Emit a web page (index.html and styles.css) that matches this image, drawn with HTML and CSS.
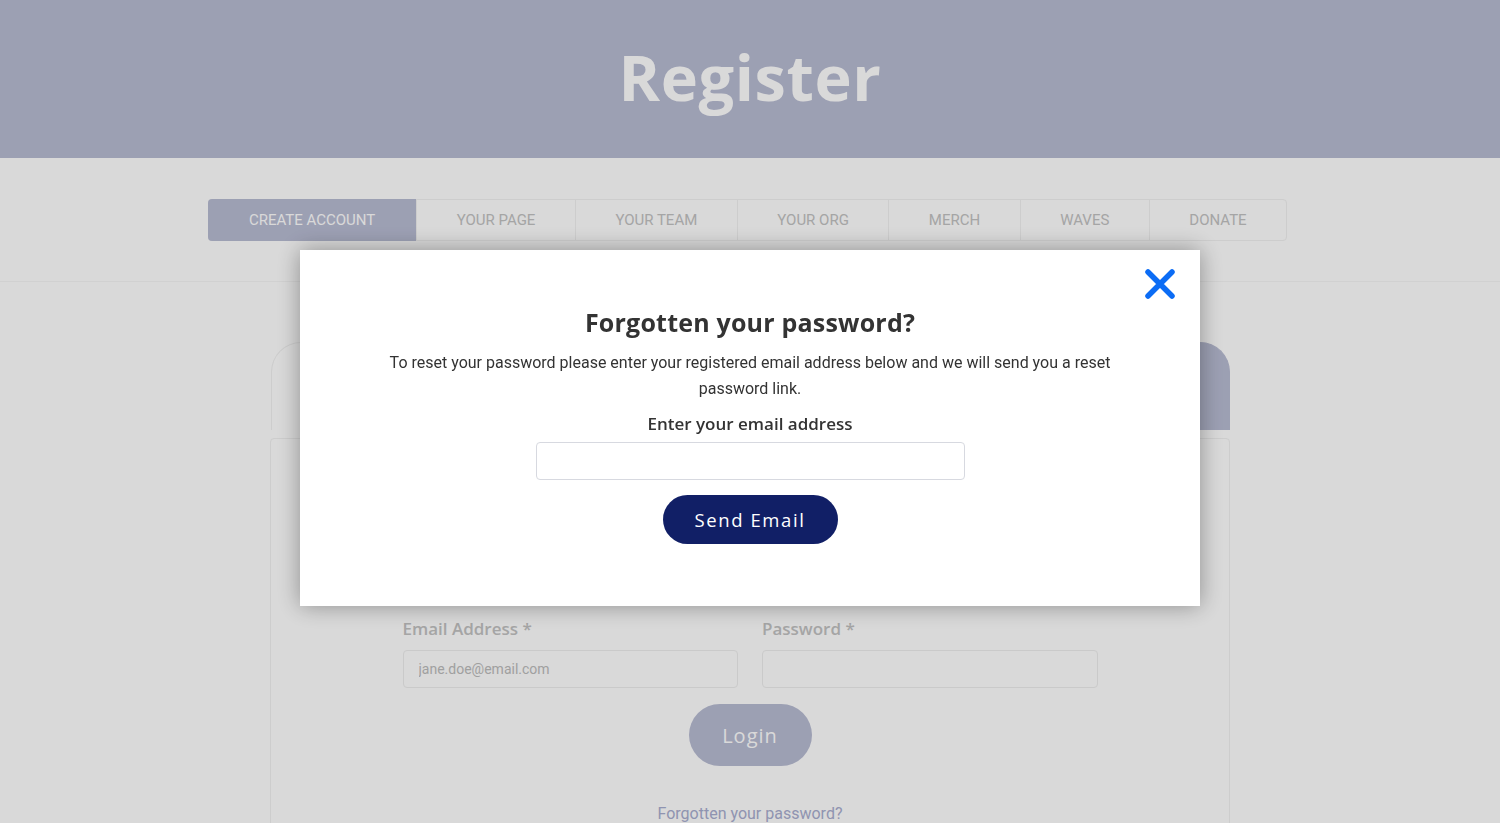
FILE: index.html
```html
<!DOCTYPE html>
<html lang="en">
<head>
    <meta charset="UTF-8">
    <meta name="viewport" content="width=device-width, initial-scale=1.0">
    <title>Register</title>
    <link rel="stylesheet" href="styles.css">
</head>
<body>
    <header class="banner">
        <h1>Register</h1>
    </header>

    <section class="steps">
        <nav class="step-tabs">
            <a class="step active" href="#">Create Account</a>
            <a class="step" href="#">Your Page</a>
            <a class="step" href="#">Your Team</a>
            <a class="step" href="#">Your Org</a>
            <a class="step" href="#">Merch</a>
            <a class="step" href="#">Waves</a>
            <a class="step" href="#">Donate</a>
        </nav>
    </section>

    <main class="account">
        <div class="toggle">
            <div class="toggle-item"></div>
            <div class="toggle-item selected"></div>
        </div>
        <div class="card">
            <form class="login-form">
                <div class="row">
                    <div class="field">
                        <label for="login-email">Email Address *</label>
                        <input type="email" id="login-email" placeholder="jane.doe@email.com">
                    </div>
                    <div class="field">
                        <label for="login-pass">Password *</label>
                        <input type="password" id="login-pass">
                    </div>
                </div>
                <button type="button" class="login-btn">Login</button>
                <a class="forgot" href="#">Forgotten your password?</a>
            </form>
        </div>
    </main>

    <div class="overlay">
        <div class="modal">
            <button class="close" aria-label="Close">
                <svg width="32" height="32" viewBox="0 0 32 32">
                    <path d="M4 4 L28 28 M28 4 L4 28" stroke="#0b6cf5" stroke-width="5.5" stroke-linecap="round" fill="none"/>
                </svg>
            </button>
            <h2>Forgotten your password?</h2>
            <p>To reset your password please enter your registered email address below and we will send you a reset password link.</p>
            <label class="modal-label" for="reset-email">Enter your email address</label>
            <input type="email" id="reset-email" class="modal-input">
            <button class="send-btn">Send Email</button>
        </div>
    </div>
</body>
</html>
```

FILE: styles.css
```css
body {
    margin: 0;
    padding: 0;
    background: #fff;
    font-family: Roboto, "Liberation Sans", sans-serif;
    color: #333;
    height: 823px;
    overflow: hidden;
}

.banner {
    background: #b8bcd3;
    height: 158px;
    display: flex;
    align-items: center;
    justify-content: center;
}

.banner h1 {
    margin: 0;
    color: #fff;
    font-family: "Open Sans", sans-serif;
    font-weight: 700;
    font-size: 63px;
    letter-spacing: 0.6px;
    padding-bottom: 6px;
}

.steps {
    padding: 41px 0 40px;
    border-bottom: 1px solid #f6f6f6;
    display: flex;
    justify-content: center;
}

.step-tabs {
    display: flex;
    border: 1px solid #f1f1f1;
    border-radius: 4px;
    margin-left: -5px;
}

.step {
    padding: 0 39.5px;
    height: 40px;
    line-height: 40px;
    font-size: 15px;
    text-transform: uppercase;
    text-decoration: none;
    color: #c2c2c2;
    border-left: 1px solid #f1f1f1;
}

.step:first-child {
    border-left: none;
}

.step.active {
    background: #b8bcd3;
    color: #fff;
    border-radius: 4px 0 0 4px;
    margin: -1px 0 -1px -1px;
    height: 42px;
    line-height: 42px;
    padding: 0 41px;
}

.account {
    width: 960px;
    margin: 60px auto 0;
}

.toggle {
    display: flex;
    gap: 4px;
    padding-left: 1px;
}

.toggle-item {
    flex: 1;
    height: 88px;
    border: 1px solid #f1f1f1;
    border-bottom: none;
    border-radius: 30px 30px 0 0;
    box-sizing: border-box;
}

.toggle-item.selected {
    background: #b8bcd3;
    border-color: #b8bcd3;
}

.card {
    margin-top: 8px;
    border: 1px solid #f1f1f1;
    border-radius: 4px 4px 0 0;
    height: 400px;
    padding-top: 178px;
    box-sizing: border-box;
}

.login-form {
    width: 695px;
    margin: 0 auto;
    display: flex;
    flex-direction: column;
    align-items: center;
}

.row {
    display: flex;
    gap: 24px;
    width: 100%;
}

.field {
    flex: 1;
    display: flex;
    flex-direction: column;
}

.field label {
    font-family: "Open Sans", sans-serif;
    font-weight: 600;
    font-size: 17px;
    color: #c2c2c2;
    margin-bottom: 10px;
}

.field input {
    height: 38px;
    border: 1px solid #eeeeee;
    border-radius: 4px;
    padding: 0 15px;
    font-family: Roboto, sans-serif;
    font-size: 14px;
    box-sizing: border-box;
}

.field input::placeholder {
    color: #bcbcbc;
}

.login-btn {
    margin-top: 16px;
    width: 123px;
    height: 62px;
    border: none;
    border-radius: 31px;
    background: #b8bcd3;
    color: #fff;
    font-family: "Open Sans", sans-serif;
    font-size: 20px;
    letter-spacing: 1px;
}

.forgot {
    margin-top: 38px;
    color: #a9aed0;
    text-decoration: none;
    font-size: 16px;
}

.overlay {
    position: fixed;
    inset: 0;
    background: rgba(0, 0, 0, 0.15);
}

.modal {
    position: absolute;
    left: 300px;
    top: 250px;
    width: 900px;
    height: 356px;
    box-sizing: border-box;
    background: #fff;
    box-shadow: 0 0 22px rgba(0, 0, 0, 0.35);
    padding: 55px 70px 0;
    display: flex;
    flex-direction: column;
    align-items: center;
    text-align: center;
}

.close {
    position: absolute;
    top: 18px;
    right: 24px;
    background: none;
    border: none;
    padding: 0;
    width: 32px;
    height: 32px;
    cursor: pointer;
}

.modal h2 {
    margin: 0;
    font-family: "Open Sans", sans-serif;
    font-weight: 700;
    font-size: 25px;
    letter-spacing: 0.2px;
    line-height: 34px;
    color: #333;
}

.modal p {
    margin: 11px 0 0;
    font-size: 16px;
    line-height: 26px;
    color: #333;
}

.modal-label {
    margin-top: 10px;
    font-family: "Open Sans", sans-serif;
    font-weight: 600;
    font-size: 17px;
    line-height: 24px;
    color: #333;
}

.modal-input {
    margin-top: 6px;
    width: 429px;
    height: 38px;
    box-sizing: border-box;
    border: 1px solid #d7d9e0;
    border-radius: 4px;
}

.send-btn {
    margin-top: 15px;
    width: 175px;
    height: 49px;
    border: none;
    border-radius: 25px;
    background: #111f66;
    color: #fff;
    font-family: "Open Sans", sans-serif;
    font-size: 18.5px;
    letter-spacing: 1.6px;
    cursor: pointer;
}
```
